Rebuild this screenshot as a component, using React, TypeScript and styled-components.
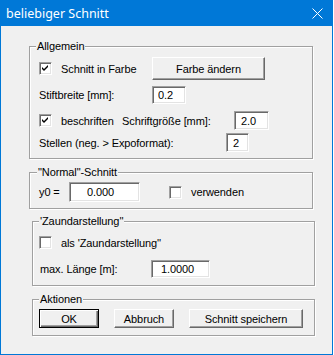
import styled, { createGlobalStyle } from 'styled-components'

const GlobalStyle = createGlobalStyle`
  html, body {
    margin: 0;
    padding: 0;
    background: #ffffff;
  }
`

const Window = styled.div`
  width: 333px;
  height: 355px;
  box-sizing: border-box;
  border: 1px solid #0078d7;
  background: #f0f0f0;
  display: flex;
  flex-direction: column;
  font-family: 'Liberation Sans', Arial, sans-serif;
  font-size: 11px;
  letter-spacing: -0.1px;
  color: #000;
`

const TitleBar = styled.div`
  height: 25px;
  background: #0078d7;
  display: flex;
  align-items: center;
  padding: 0 9px 0 5px;
  color: #fff;
  flex-shrink: 0;
`

const Title = styled.span`
  font-family: 'Noto Sans', 'Open Sans', sans-serif;
  font-size: 12.5px;
  letter-spacing: 0;
  flex: 1;
  margin-top: -1px;
`

const CloseIcon = styled.svg`
  width: 11px;
  height: 11px;
  margin-top: -1px;
`

const Body = styled.div`
  flex: 1;
  display: flex;
  flex-direction: column;
  padding-top: 20px;
`

const Group = styled.div<{ $left: number; $width: number; $height: number; $gap: number; $pad: number }>`
  position: relative;
  box-sizing: border-box;
  margin-left: ${({ $left }) => $left}px;
  margin-top: ${({ $gap }) => $gap}px;
  width: ${({ $width }) => $width}px;
  height: ${({ $height }) => $height}px;
  border: 1px solid #a0a0a0;
  box-shadow: inset 1px 1px 0 #fff, 1px 1px 0 #fff;
  padding-left: ${({ $pad }) => $pad}px;
  display: flex;
  flex-direction: column;
`

const Legend = styled.span<{ $left: number }>`
  position: absolute;
  top: -8px;
  left: ${({ $left }) => $left}px;
  padding: 0 1px;
  line-height: 14px;
  background: #f0f0f0;
`

const Row = styled.div<{ $top: number; $h: number }>`
  display: flex;
  align-items: center;
  margin-top: ${({ $top }) => $top}px;
  height: ${({ $h }) => $h}px;
`

const Label = styled.span<{ $w?: number; $pl?: number }>`
  box-sizing: border-box;
  white-space: nowrap;
  ${({ $w }) => ($w ? `width: ${$w}px; flex-shrink: 0;` : '')}
  padding-left: ${({ $pl }) => $pl ?? 0}px;
`

const Spacer = styled.span<{ $w: number }>`
  width: ${({ $w }) => $w}px;
  flex-shrink: 0;
`

const Field = styled.input<{ $w: number; $h: number; $indent: number }>`
  box-sizing: border-box;
  width: ${({ $w }) => $w}px;
  height: ${({ $h }) => $h}px;
  margin: 0;
  padding: 0 0 0 ${({ $indent }) => $indent}px;
  border: 1px solid;
  border-color: #a0a0a0 #fff #fff #a0a0a0;
  box-shadow: inset 1px 1px 0 #696969, inset -1px -1px 0 #e3e3e3;
  background: #fff;
  font-family: 'Liberation Sans', Arial, sans-serif;
  font-size: 11px;
  letter-spacing: -0.1px;
  color: #000;
  outline: none;
  flex-shrink: 0;
`

const Check = styled.span`
  box-sizing: border-box;
  width: 13px;
  height: 13px;
  flex-shrink: 0;
  border: 1px solid;
  border-color: #a0a0a0 #fff #fff #a0a0a0;
  box-shadow: inset 1px 1px 0 #696969, inset -1px -1px 0 #e3e3e3;
  background: #fff;
  display: flex;
  align-items: center;
  justify-content: center;
`

const Button = styled.button<{ $w: number; $h: number; $default?: boolean }>`
  box-sizing: border-box;
  width: ${({ $w }) => $w}px;
  height: ${({ $h }) => $h}px;
  margin: 0;
  padding: 0;
  flex-shrink: 0;
  background: #f0f0f0;
  font-family: 'Liberation Sans', Arial, sans-serif;
  font-size: 11px;
  letter-spacing: -0.1px;
  color: #000;
  border: 1px solid;
  border-color: ${({ $default }) => ($default ? '#000' : '#fff #696969 #696969 #fff')};
  box-shadow: ${({ $default }) =>
    $default
      ? 'inset 1px 1px 0 #fff, inset -1px -1px 0 #696969, inset -2px -2px 0 #a0a0a0'
      : 'inset -1px -1px 0 #a0a0a0'};
`

function CheckBox({ checked }: { checked?: boolean }) {
  return (
    <Check>
      {checked && (
        <svg width="7" height="7" viewBox="0 0 7 7">
          <path d="M0 2 L2 4 L6 0 V2 L2 6 L0 4 Z" fill="#000" />
        </svg>
      )}
    </Check>
  )
}

export default function App() {
  return (
    <>
      <GlobalStyle />
      <Window>
        <TitleBar>
          <Title>beliebiger Schnitt</Title>
          <CloseIcon viewBox="0 0 11 11">
            <path d="M0.5 0.5 L10.5 10.5 M10.5 0.5 L0.5 10.5" stroke="#fff" strokeWidth="1" />
          </CloseIcon>
        </TitleBar>
        <Body>
          <Group $left={28} $width={284} $height={113} $gap={0} $pad={9}>
            <Legend $left={6}>Allgemein</Legend>
            <Row $top={10} $h={23}>
              <CheckBox checked />
              <Label $w={100} $pl={9}>Schnitt in Farbe</Label>
              <Button $w={113} $h={23}>Farbe ändern</Button>
            </Row>
            <Row $top={6} $h={18}>
              <Label $w={113}>Stiftbreite [mm]:</Label>
              <Field $w={34} $h={18} $indent={5} readOnly value="0.2" />
            </Row>
            <Row $top={7} $h={19}>
              <CheckBox checked />
              <Label $w={70} $pl={9}>beschriften</Label>
              <Label $w={112}>Schriftgröße [mm]:</Label>
              <Field $w={35} $h={19} $indent={6} readOnly value="2.0" />
            </Row>
            <Row $top={3} $h={19}>
              <Label $w={187}>Stellen (neg. &gt; Expoformat):</Label>
              <Field $w={23} $h={19} $indent={6} readOnly value="2" />
            </Row>
          </Group>

          <Group $left={28} $width={284} $height={37} $gap={13} $pad={9}>
            <Legend $left={7}>"Normal"-Schnitt</Legend>
            <Row $top={9} $h={20}>
              <Label $w={30}>y0 =</Label>
              <Field $w={71} $h={20} $indent={17} readOnly value="0.000" />
              <Spacer $w={29} />
              <CheckBox />
              <Label $pl={9}>verwenden</Label>
            </Row>
          </Group>

          <Group $left={31} $width={283} $height={65} $gap={12} $pad={6}>
            <Legend $left={6}>'Zaundarstellung''</Legend>
            <Row $top={14} $h={13}>
              <CheckBox />
              <Label $pl={9}>als 'Zaundarstellung''</Label>
            </Row>
            <Row $top={11} $h={18}>
              <Label $w={112} $pl={1}>max. Länge [m]:</Label>
              <Field $w={59} $h={18} $indent={9} readOnly value="1.0000" />
            </Row>
          </Group>

          <Group $left={31} $width={283} $height={37} $gap={13} $pad={6}>
            <Legend $left={6}>Aktionen</Legend>
            <Row $top={9} $h={19}>
              <Button $w={60} $h={19} $default>OK</Button>
              <Spacer $w={15} />
              <Button $w={60} $h={19}>Abbruch</Button>
              <Spacer $w={15} />
              <Button $w={114} $h={19}>Schnitt speichern</Button>
            </Row>
          </Group>
        </Body>
      </Window>
    </>
  )
}
